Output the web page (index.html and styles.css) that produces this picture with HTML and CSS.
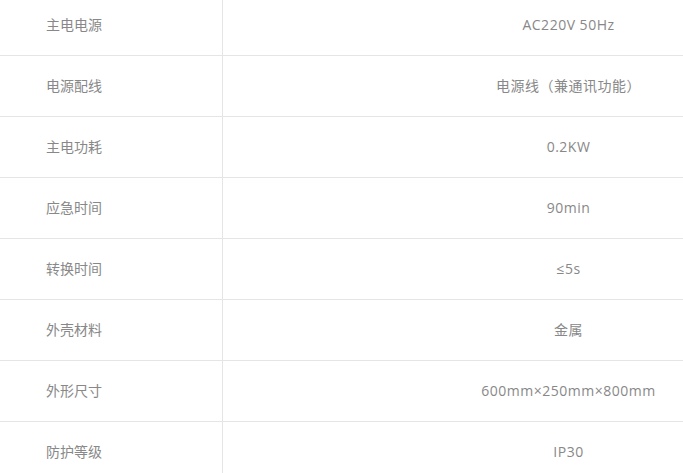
FILE: index.html
```html
<!DOCTYPE html>
<html lang="zh">
<head>
<meta charset="utf-8">
<link rel="stylesheet" href="styles.css">
</head>
<body>
<div class="wrap">
<table class="spec">
<tbody>
<tr><td class="k">主电电源</td><td class="v">AC220V 50Hz</td></tr>
<tr><td class="k">电源配线</td><td class="v">电源线（兼通讯功能）</td></tr>
<tr><td class="k">主电功耗</td><td class="v">0.2KW</td></tr>
<tr><td class="k">应急时间</td><td class="v">90min</td></tr>
<tr><td class="k">转换时间</td><td class="v">≤5s</td></tr>
<tr><td class="k">外壳材料</td><td class="v">金属</td></tr>
<tr><td class="k">外形尺寸</td><td class="v">600mm×250mm×800mm</td></tr>
<tr><td class="k">防护等级</td><td class="v">IP30</td></tr>
</tbody>
</table>
</div>
</body>
</html>
```
FILE: styles.css
```css
html, body {
  margin: 0;
  padding: 0;
  background: #fff;
  overflow: hidden;
}
.wrap {
  margin-top: -5px;
}
.spec {
  border-collapse: collapse;
  width: 100%;
  font-family: "Open Sans", "Noto Sans CJK SC", sans-serif;
  font-size: 14px;
  color: #888;
}
.spec td {
  height: 58px;
  padding: 0 0 2px 0;
  border-bottom: 1px solid #e5e5e5;
  vertical-align: middle;
}
.spec .k {
  width: 176px;
  padding-left: 46px;
  border-right: 1px solid #e5e5e5;
}
.spec .v {
  padding-left: 231px;
  text-align: center;
  letter-spacing: 0.5px;
  white-space: nowrap;
}
```
